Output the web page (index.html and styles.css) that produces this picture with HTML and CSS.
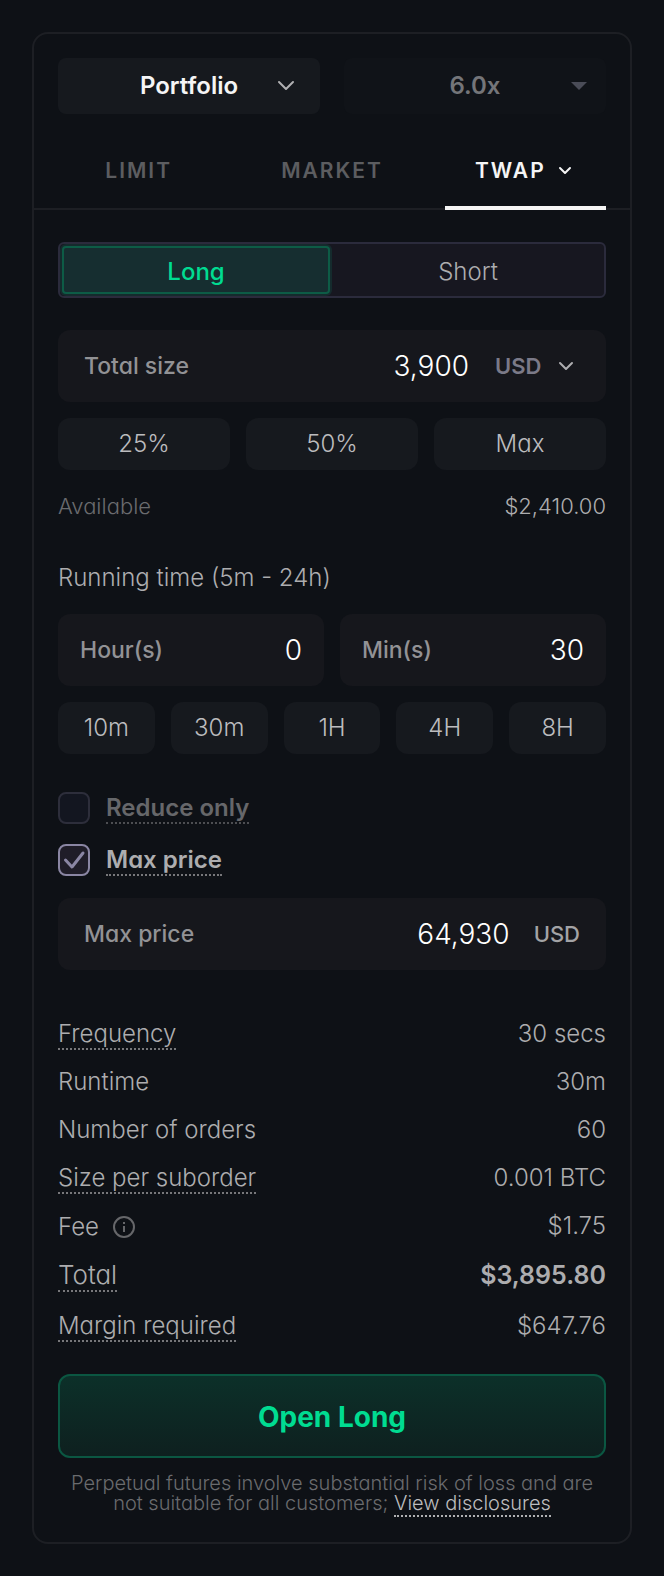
FILE: index.html
```html
<!DOCTYPE html>
<html lang="en">
<head>
    <meta charset="UTF-8">
    <meta name="viewport" content="width=device-width, initial-scale=1.0">
    <title>Open Position</title>
    <link rel="stylesheet" href="styles.css">
</head>
<body>

    <form class="panel">
        <div class="top-selects">
            <div class="select-box">
                <select aria-label="Margin mode">
                    <option>Portfolio</option>
                </select>
                <svg class="select-icon chevron" width="18" height="12" viewBox="0 0 18 12"><path d="M2 2l7 7 7-7"/></svg>
            </div>
            <div class="select-box disabled">
                <select aria-label="Leverage" disabled>
                    <option>6.0x</option>
                </select>
                <svg class="select-icon caret" width="16" height="8" viewBox="0 0 16 8"><path d="M0 0h16L8 8z"/></svg>
            </div>
        </div>

        <div class="tabs">
            <button type="button" class="tab">LIMIT</button>
            <button type="button" class="tab">MARKET</button>
            <button type="button" class="tab active">TWAP
                <svg class="chevron" width="18" height="10" viewBox="0 0 18 10"><path d="M2 2l5 5 5-5"/></svg>
            </button>
        </div>

        <div class="content">
            <div class="side">
                <button type="button" class="side-btn long">Long</button>
                <button type="button" class="side-btn">Short</button>
            </div>

            <div class="field size-field">
                <label for="size">Total size</label>
                <input type="text" id="size" value="3,900">
                <div class="unit-select">
                    <select aria-label="Size unit">
                        <option>USD</option>
                    </select>
                    <svg class="chevron" width="16" height="12" viewBox="0 0 16 12"><path d="M2 3l6 6 6-6"/></svg>
                </div>
            </div>

            <div class="presets">
                <button type="button">25%</button>
                <button type="button">50%</button>
                <button type="button">Max</button>
            </div>

            <div class="available">
                <span>Available</span>
                <span class="amount">$2,410.00</span>
            </div>

            <div class="section-title">Running time (5m - 24h)</div>
            <div class="time-fields">
                <div class="field">
                    <label for="hours">Hour(s)</label>
                    <input type="text" id="hours" value="0">
                </div>
                <div class="field">
                    <label for="mins">Min(s)</label>
                    <input type="text" id="mins" value="30">
                </div>
            </div>
            <div class="presets">
                <button type="button">10m</button>
                <button type="button">30m</button>
                <button type="button">1H</button>
                <button type="button">4H</button>
                <button type="button">8H</button>
            </div>

            <div class="checks">
                <div class="check off">
                    <input type="checkbox" id="reduceOnly">
                    <label for="reduceOnly" class="hint">Reduce only</label>
                </div>
                <div class="check">
                    <span class="tick">
                        <input type="checkbox" id="useMaxPrice" checked>
                        <svg width="32" height="32" viewBox="0 0 32 32"><path d="M7.500 16l6.500 7L25 9"/></svg>
                    </span>
                    <label for="useMaxPrice" class="hint">Max price</label>
                </div>
            </div>

            <div class="field price-field">
                <label for="price">Max price</label>
                <input type="text" id="price" value="64,930">
                <span class="unit">USD</span>
            </div>

            <div class="summary">
                <div class="row"><span class="hint">Frequency</span><span>30 secs</span></div>
                <div class="row"><span>Runtime</span><span>30m</span></div>
                <div class="row"><span>Number of orders</span><span>60</span></div>
                <div class="row"><span class="hint">Size per suborder</span><span>0.001 BTC</span></div>
                <div class="row">
                    <span class="fee">Fee
                        <svg width="22" height="22" viewBox="0 0 22 22"><circle cx="11" cy="11" r="10"/><path d="M11 10v6M11 6v2"/></svg>
                    </span>
                    <span>$1.75</span>
                </div>
                <div class="row total"><span class="hint">Total</span><strong>$3,895.80</strong></div>
                <div class="row"><span class="hint">Margin required</span><span>$647.76</span></div>
            </div>

            <button type="submit" class="submit">Open Long</button>

            <p class="disclosure">Perpetual futures involve substantial risk of loss and are not suitable for all customers; <a href="#">View disclosures</a></p>
        </div>
    </form>

</body>
</html>
```
FILE: styles.css
```css
* {
    box-sizing: border-box;
}
body {
    margin: 0;
    padding: 32px;
    background-color: #0e1116;
    color: #adadaf;
    font-family: Inter, "Liberation Sans", sans-serif;
    font-size: 24px;
    font-weight: 300;
    line-height: 32px;
    font-feature-settings: "cv11"; /* single-storey a */
}
button, input, select {
    font: inherit;
    font-feature-settings: inherit;
    color: inherit;
    border: none;
    background: none;
    margin: 0;
    padding: 0;
    outline: none;
}
button, select {
    cursor: pointer;
}
select {
    appearance: none;
}
svg {
    fill: none;
    flex-shrink: 0;
}
.chevron {
    stroke: currentColor;
    stroke-width: 2;
    stroke-linecap: round;
    stroke-linejoin: round;
}
.panel {
    border: 2px solid #1d1f24;
    border-radius: 16px;
}

/* Account and leverage */
.top-selects {
    display: grid;
    grid-template-columns: 1fr 1fr;
    gap: 24px;
    padding: 24px 24px 0;
}
.select-box {
    position: relative;
    height: 56px;
    border-radius: 8px;
    background-color: #16191e;
}
.select-box select {
    width: 100%;
    height: 100%;
    text-align: center;
    text-align-last: center;
    font-weight: 600;
    color: #f5f5f5;
}
.select-icon {
    position: absolute;
    right: 25px;
    top: 50%;
    transform: translateY(-50%);
    color: #b0b0b2;
    pointer-events: none;
}
.select-box.disabled {
    background-color: #101318;
}
.select-box.disabled select {
    color: #747579;
    opacity: 1;
}
.caret {
    right: 19px;
    fill: #4a4c57;
}

/* Order type tabs */
.tabs {
    display: grid;
    grid-template-columns: repeat(3, 1fr);
    gap: 32px;
    margin-top: 20px;
    padding: 0 24px;
    border-bottom: 2px solid #1d1f24;
}
.tab {
    display: flex;
    align-items: center;
    justify-content: center;
    gap: 12px;
    height: 76px;
    margin-bottom: -2px;
    padding-top: 2px;
    border-bottom: 4px solid transparent;
    font-size: 21px;
    font-weight: 600;
    letter-spacing: 2px;
    color: #5c5d60;
}
.tab.active {
    color: #f5f5f5;
    border-color: #f5f5f5;
}

.content {
    display: flex;
    flex-direction: column;
    padding: 32px 24px 28px;
}

/* Long / Short switch */
.side {
    display: grid;
    grid-template-columns: 1fr 1fr;
    height: 56px;
    border: 2px solid #2b2b3c;
    border-radius: 6px;
    background-color: #171720;
}
.side-btn {
    padding-top: 3px;
}
.side-btn.long {
    border: 2px solid #0d5c46;
    border-radius: 4px;
    box-shadow: 0 0 0 2px #152b2d;
    margin: 2px;
    background-color: #162e30;
    color: #00dc91;
    font-weight: 500;
}

/* Inputs */
.field {
    display: flex;
    align-items: center;
    min-width: 0;
    height: 72px;
    padding: 0 22px;
    border-radius: 12px;
    background-color: #16171c;
    font-size: 23px;
    font-weight: 500;
    color: #929295;
}
.field label {
    flex-shrink: 0;
}
.field input {
    flex: 1;
    min-width: 0;
    text-align: right;
    font-size: 28px;
    font-weight: 300;
    color: #fff;
}
.size-field {
    margin-top: 32px;
}
.size-field, .price-field {
    padding: 0 26px;
}
.unit-select {
    display: flex;
    align-items: center;
    margin-left: 26px;
    padding-right: 6px;
    gap: 16px;
    color: #adadb0;
}
.unit-select select {
    font-size: 22px;
    font-weight: 600;
    color: #7b7a88;
}
.unit {
    margin-left: 24px;
    font-size: 22px;
    color: #a3a3a5;
}
.presets {
    display: grid;
    grid-auto-flow: column;
    grid-auto-columns: 1fr;
    gap: 16px;
    margin-top: 16px;
}
.presets button {
    height: 52px;
    border-radius: 12px;
    background-color: #16191e;
    color: #bcbcbe;
}
.available {
    display: flex;
    justify-content: space-between;
    margin-top: 20px;
    font-size: 22px;
    color: #6a6b6e;
}
.amount {
    color: #adadaf;
}
.section-title {
    margin-top: 40px;
}
.time-fields {
    display: grid;
    grid-template-columns: 1fr 1fr;
    gap: 16px;
    margin-top: 20px;
}

/* Dotted underline for labels with a tooltip */
.hint {
    line-height: 30px;
    border-bottom: 2px dotted #77777a;
}

.checks {
    display: flex;
    flex-direction: column;
    gap: 20px;
    margin: 38px 0 22px;
}
.check {
    display: flex;
    gap: 16px;
    font-weight: 600;
}
.check .hint {
    padding-top: 2px;
    line-height: 28px;
}
.check.off {
    color: #66676a;
}
.check.off .hint {
    border-color: #4d4e52;
}
.check input {
    appearance: none;
    display: block;
    width: 32px;
    height: 32px;
    border: 2px solid #2d2e3b;
    border-radius: 8px;
    background-color: #131620;
}
.check input:checked {
    border-color: #8a86a3;
    background-color: #1f1d28;
}
.tick {
    position: relative;
}
.tick svg {
    position: absolute;
    inset: 0;
    stroke: #8a86a3;
    stroke-width: 3;
    stroke-linecap: round;
    stroke-linejoin: round;
    pointer-events: none;
}
.tick input:not(:checked) + svg {
    display: none;
}

/* Order summary */
.summary {
    display: flex;
    flex-direction: column;
    gap: 16px;
    margin-top: 48px;
}
.row {
    display: flex;
    justify-content: space-between;
    padding-top: 1px;
    line-height: 30px;
    min-height: 32px;
}
.row .hint {
    line-height: 29px;
}
.fee {
    display: flex;
    align-items: center;
    gap: 14px;
}
.fee svg {
    stroke: #66676a;
    stroke-width: 2;
}
.total {
    padding-bottom: 2px;
    font-size: 25px;
    line-height: 32px;
}
.total .hint {
    font-size: 26px;
    line-height: 31px;
}
.total strong {
    font-weight: 600;
}

.submit {
    height: 84px;
    margin-top: 32px;
    padding-top: 2px;
    border: 2px solid #0b5742;
    border-radius: 12px;
    background: linear-gradient(#0c3029, #0e201f);
    color: #00dc91;
    font-size: 28px;
    font-weight: 700;
}
.disclosure {
    margin: 15px 0 1px;
    font-size: 20px;
    line-height: 20px;
    text-align: center;
    color: #6a6b6e;
}
.disclosure a {
    color: #bcbcbe;
    text-decoration: none;
    border-bottom: 2px dotted #b0b0b2;
}
```
